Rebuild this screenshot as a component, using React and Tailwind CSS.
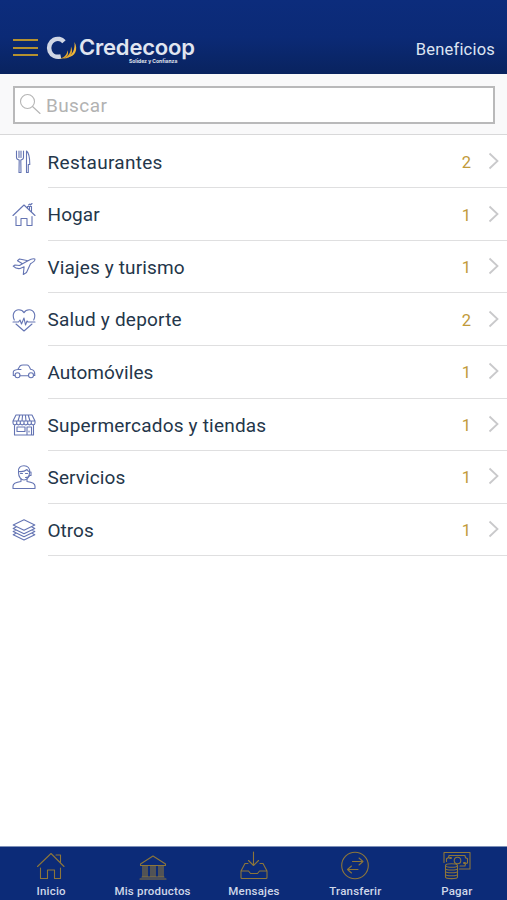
import React, { useState } from 'react';
import clsx from 'clsx';

const categories = [
  { name: 'Restaurantes', count: 2, icon: RestaurantIcon, tracking: 'tracking-[0.3px]' },
  { name: 'Hogar', count: 1, icon: HomeIcon, tracking: 'tracking-[0.1px]' },
  { name: 'Viajes y turismo', count: 1, icon: PlaneIcon, tracking: 'tracking-[0.15px]' },
  { name: 'Salud y deporte', count: 2, icon: HeartIcon, tracking: 'tracking-[0.2px]' },
  { name: 'Automóviles', count: 1, icon: CarIcon, tracking: 'tracking-[0.05px]' },
  { name: 'Supermercados y tiendas', count: 1, icon: StoreIcon, tracking: 'tracking-[0.2px]' },
  { name: 'Servicios', count: 1, icon: SupportIcon, tracking: 'tracking-[0.1px]' },
  { name: 'Otros', count: 1, icon: LayersIcon, tracking: 'tracking-[0px]' },
];

const tabs = [
  { name: 'Inicio', icon: TabHomeIcon },
  { name: 'Mis productos', icon: BankIcon },
  { name: 'Mensajes', icon: InboxIcon },
  { name: 'Transferir', icon: TransferIcon },
  { name: 'Pagar', icon: CashIcon },
];

function Icon({ size = 24, className, children }) {
  return (
    <svg
      width={size}
      height={size}
      viewBox={`0 0 ${size} ${size}`}
      fill="none"
      stroke="currentColor"
      strokeWidth="1.1"
      strokeLinejoin="round"
      strokeLinecap="round"
      className={clsx('shrink-0', className)}
    >
      {children}
    </svg>
  );
}

function RestaurantIcon() {
  return (
    <Icon>
      <path d="M4.500 1v6.500c0 1.500 1.300 2.200 2.700 2.600L7 22.500M11.500 1v6.500c0 1.500-1.300 2.200-2.700 2.600L9 22.500M7 1v6.500M9 1v6.500M7 22.500h2" />
      <path d="M14.500 22.500V1c2 1.500 3.300 5 3.300 13.500h-1.500v8z" />
    </Icon>
  );
}

function HomeIcon() {
  return (
    <Icon>
      <path d="M1 12.500 12 2l11 10.500M4 13.500v9h5v-7h6v7h5v-9M15.500 5.200V3.500h4v5.200M16.500 2l1.500-1M18.500 2l1.500-1.500M17.500 4v3" />
    </Icon>
  );
}

function PlaneIcon() {
  return (
    <Icon>
      <path d="M1.200 11.200l1.800-1.200 4.500.5 3-1.800-5-3 2-1.700 8.500 1.800c2.500-1.500 5-2.600 6.800-1.700.8 1.500-1.800 3.200-4.300 4.700l-4 8.700-3.200 2 .8-7.800-4 1.800c-2 .3-5-.5-6.900-2.300zM10.500 8.700l5.500-2.900" />
    </Icon>
  );
}

function HeartIcon() {
  return (
    <Icon>
      <path d="M2.300 12C-.2 7 2 1.700 6.800 1.700c2.700 0 4.400 1.500 5.200 3 .8-1.500 2.500-3 5.200-3 4.800 0 7 5.300 4.500 10.300M4 16l8 7 8-7" />
      <path d="M1 14h5.500l1.500-2 1.500 4 2.500-6 1.500 7 1.500-4 1 1H23" />
    </Icon>
  );
}

function CarIcon() {
  return (
    <Icon>
      <path d="M3 15.500H1.300V12c0-1.500 1-2 4.500-2.500L8 6c.8-.8 1.500-1 3-1h4c1.500 0 2.300.8 3.500 4.300 3.500.7 4.300 1.700 4.300 6.200H22M8 15.800h8.500M6 9.500h3" />
      <circle cx="5.500" cy="15.300" r="2.500" />
      <circle cx="19" cy="15.300" r="2.500" />
    </Icon>
  );
}

function StoreIcon() {
  return (
    <Icon>
      <path d="M4 2h16l3 6v2c0 2.500-3.700 2.500-3.700 0 0 2.500-3.600 2.500-3.600 0 0 2.500-3.700 2.500-3.700 0 0 2.500-3.700 2.500-3.700 0 0 2.500-3.600 2.500-3.600 0 0 2.500-3.700 2.500-3.700 0V8zM1 8h22M4.700 8v2M8.300 8v2M12 8v2M15.700 8v2M19.300 8v2M6 8l1.800-6M10 8l.6-6M14 8l-.6-6M18 8l-1.800-6" />
      <path d="M2.500 12.500V22h19v-9.500M5 14h8v4.500H5zM15 22v-8h4.500v8M17 18v1" />
    </Icon>
  );
}

function SupportIcon() {
  return (
    <Icon>
      <path d="M6.500 7.500C5.500 3 8.500.8 12 .8s6.500 2.200 5.500 7C17.500 12 15 15 12 15s-5.500-3-5.500-7.500z" />
      <path d="M7 6.500c3 .5 6-.3 8-2 .8 1.500 1.500 2 2.500 2.200M17.500 7h1.500v3.500h-1.500c-.5 1.500-2 2-4 2M8.500 8.500h2M13.500 8.500h2M9 14v2.500c-3.500.5-8 1.500-8 4.500v2.500h22V21c0-3-4.500-4-8-4.500V14" />
    </Icon>
  );
}

function LayersIcon() {
  return (
    <Icon>
      <path d="M12 1.800 22.800 7 12 12.300 1.200 7z" />
      <path d="M4 9l-2.800 1.400L12 15.700l10.800-5.300L20 9M4 12.200l-2.800 1.400L12 18.800l10.800-5.200-2.800-1.400M4 15.300l-2.800 1.400L12 21.900l10.800-5.200-2.800-1.400" />
    </Icon>
  );
}

function TabHomeIcon() {
  return (
    <Icon size={30}>
      <path d="M1.500 15.500 15 2.500l13 13M4.500 17v10.500h7V19h7v8.500h6V17M20 4h4.500v7" />
    </Icon>
  );
}

function BankIcon() {
  return (
    <Icon size={30}>
      <path d="M2.500 13 15 5l12.500 8v1.500h-25zM2 28h26M4 26h22M5 15v10.500M7 15v10.500M9 15v10.500M13 15v10.500M15 15v10.500M17 15v10.500M21 15v10.500M23 15v10.500M25 15v10.500" />
    </Icon>
  );
}

function InboxIcon() {
  return (
    <Icon size={30}>
      <path d="M14.500 1v13M9.500 9.500l5 5 5-5M9 12.500H6L2 20v6.500c0 .8.500 1 1 1h24c.5 0 1-.2 1-1V20l-4-7.500h-3M2 20h7.500l2 2.500h7l2-2.500H28" />
    </Icon>
  );
}

function TransferIcon() {
  return (
    <Icon size={30}>
      <circle cx="15" cy="14.500" r="13.300" />
      <path d="M12.500 10.500h10M19 7l4 3.500-4 3.500M18 18.500H8M11.500 15l-4 3.500 4 3.500" />
    </Icon>
  );
}

function CashIcon() {
  return (
    <Icon size={30}>
      <path d="M2 11.500V1.500h26v16.500H17.500M4.500 10.500V7.500c1.500 0 2.500-1 2.500-3h16c0 2 1 3 2.500 3V12c-1.500 0-2.500 1-2.500 3h-5" />
      <circle cx="15.500" cy="9.500" r="3.300" />
      <path d="M8 7h1M22 12h1" strokeWidth="2" />
      <path d="M3.500 14.500v11.500c0 2.200 12 2.200 12 0V14.500M3.500 17.500c0 2 12 2 12 0M3.500 20.300c0 2 12 2 12 0M3.500 23.200c0 2 12 2 12 0" />
      <ellipse cx="9.500" cy="14.500" rx="6" ry="1.800" />
    </Icon>
  );
}

function Logo() {
  return (
    <div className="flex items-start text-[#e0e5f0]">
      <svg width="33" height="25" viewBox="0 0 33 25" fill="none" className="shrink-0">
        <path d="M18 5.800C15.500 3 11.500 2 8 3.800 3.800 6 2 11 3.800 15.500c1.800 4.300 6.500 6 11 5" stroke="#d0d6e4" strokeWidth="4.500" />
        <path d="M13 22.800c5-1 8-3.500 8.500-8.500 1.800 4.500-.5 9-8.500 8.500z" fill="#e2a62d" />
        <path d="M17 22.500c5.500-2 8-6 8-12 2.800 6 0 12.500-8 12z" fill="#e2a62d" />
        <path d="M21.500 21.500c5.500-3.300 7.500-8 7-15.500 4 7.500.7 14.500-7 15.500z" fill="#efb63a" />
      </svg>
      <div className="w-[118px]">
        <p className="font-['Inter',sans-serif] text-[22px] leading-[23px] font-semibold tracking-[-0.200px] whitespace-nowrap">Credecoop</p>
        <p className="pl-[50px] font-['Inter',sans-serif] text-[5px] leading-[5px] font-bold whitespace-nowrap">Solidez y Confianza</p>
      </div>
    </div>
  );
}

function App() {
  const [query, setQuery] = useState('');

  const filtered = categories.filter((c) => c.name.toLowerCase().includes(query.trim().toLowerCase()));

  return (
    <div className="flex h-screen w-full flex-col overflow-hidden bg-white font-['Roboto',sans-serif]">
      {/* Header */}
      <header className="flex h-[74px] shrink-0 items-end justify-between bg-linear-to-b from-[#0c2c7c] via-[#0b2a76] to-[#09235f] pr-3 pl-[13px]">
        <div className="flex items-start pb-[10px]">
          <button className="mt-[3px] mr-[8px] flex w-[25px] flex-col gap-[5.500px]" aria-label="Menu">
            <span className="h-[2px] w-full bg-[#b5912f]" />
            <span className="h-[2px] w-full bg-[#b5912f]" />
            <span className="h-[2px] w-full bg-[#b5912f]" />
          </button>
          <Logo />
        </div>
        <h1 className="pb-[14px] text-[16.500px] leading-[20px] tracking-[0.200px] text-[#dde4f2]">Beneficios</h1>
      </header>

      {/* Search */}
      <div className="h-[61px] shrink-0 border-b border-[#d8d8d9] bg-[#f9f9fa] pt-[12px] pr-[12px] pl-[13px]">
        <label className="flex h-[38px] items-center border-2 border-[#b9b9ba] bg-white pl-[4px]">
          <Icon size={24} className="text-[#b5b5b5]">
            <circle cx="8.500" cy="8.500" r="7" />
            <path d="M13.500 13.500l7.500 7" />
          </Icon>
          <input
            type="text"
            value={query}
            onChange={(e) => setQuery(e.target.value)}
            placeholder="Buscar"
            className="ml-[3px] w-full bg-transparent pt-[2px] text-[19px] tracking-[0.400px] text-[#1f3044] outline-none placeholder:text-[#b2b2b2]"
          />
        </label>
      </div>

      {/* Categories */}
      <ul className="flex-1 overflow-hidden pt-[0.800px]">
        {filtered.map(({ name, count, icon: CategoryIcon, tracking }) => (
          <li key={name} className="flex h-[52.550px] items-center pl-[12px] text-[#6474b3]">
            <CategoryIcon />
            <div className="ml-[12px] flex h-full flex-1 items-center border-b border-[#dfdfe0] pr-[8px]">
              <span className={clsx('-ml-[0.500px] flex-1 pt-[3px] text-[19px] whitespace-nowrap text-[#24364a]', tracking)}>{name}</span>
              <span className="mr-[17px] pt-[4px] text-[16.500px] text-[#c19a3a]">{count}</span>
              <svg width="11" height="18" viewBox="0 0 11 18" fill="none" stroke="#c9c9cb" strokeWidth="1.800" className="mb-px">
                <path d="M1.500 1.500 9.500 9l-8 7.500" />
              </svg>
            </div>
          </li>
        ))}
      </ul>

      {/* Tab bar */}
      <nav className="grid h-[54px] shrink-0 grid-cols-5 border-t border-[#7d90b8] bg-[#0c2b78]">
        {tabs.map(({ name, icon: TabIcon }) => (
          <button key={name} className="flex flex-col items-center pt-[4px] pl-px text-[#8d763a]">
            <TabIcon />
            <span className="mt-[2px] text-[11.500px] leading-[16px] font-medium tracking-[0.200px] whitespace-nowrap text-[#cfd7e9]">{name}</span>
          </button>
        ))}
      </nav>
    </div>
  );
}

export default App;
